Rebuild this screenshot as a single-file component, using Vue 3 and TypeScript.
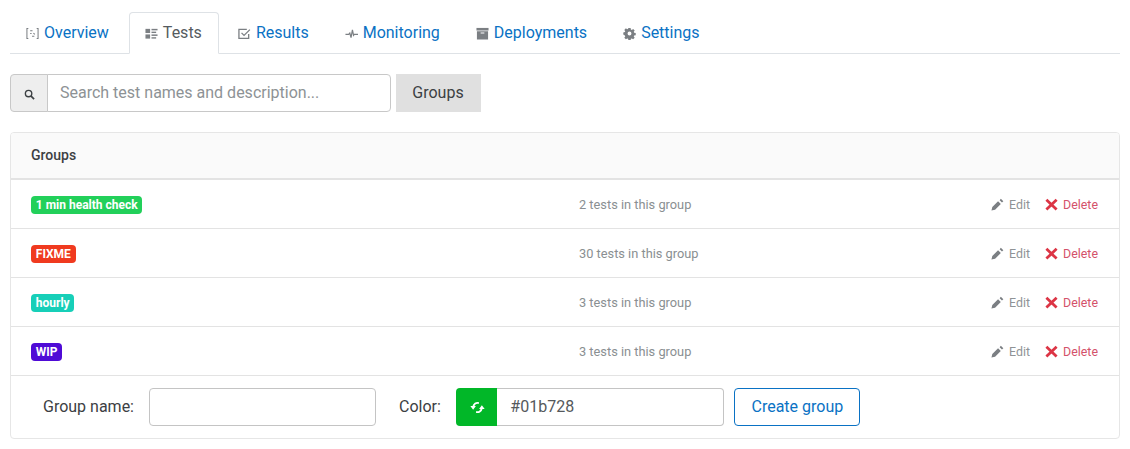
<script setup lang="ts">
interface Tab { label: string; icon: string; active?: boolean }
interface Group { name: string; color: string; count: number }

const tabs: Tab[] = [
  { label: 'Overview', icon: 'overview' },
  { label: 'Tests', icon: 'tests', active: true },
  { label: 'Results', icon: 'results' },
  { label: 'Monitoring', icon: 'monitoring' },
  { label: 'Deployments', icon: 'deployments' },
  { label: 'Settings', icon: 'settings' },
]

const groups: Group[] = [
  { name: '1 min health check', color: '#22d05a', count: 2 },
  { name: 'FIXME', color: '#f03a1f', count: 30 },
  { name: 'hourly', color: '#17cfb8', count: 3 },
  { name: 'WIP', color: '#4f0bd6', count: 3 },
]
</script>

<template>
  <div class="page">
    <nav class="tabs">
      <a v-for="tab in tabs" :key="tab.label" class="tab" :class="{ active: tab.active }">
        <svg class="tab-icon" viewBox="0 0 14 14" aria-hidden="true">
          <g v-if="tab.icon === 'overview'" fill="none" stroke="currentColor" stroke-width="1.1">
            <path d="M2.500 1.500H1v11h1.500M11.500 1.500H13v11h-1.500" />
            <path d="M4.500 4h2.500M4.500 7h1.500M8 6.500l1.500 1.500M6.500 10h2.500" />
          </g>
          <g v-else-if="tab.icon === 'tests'" fill="currentColor">
            <rect x="0.500" y="2" width="5" height="4.500" />
            <rect x="0.500" y="8" width="5" height="4.500" />
            <rect x="7" y="2" width="6.500" height="1.600" />
            <rect x="7" y="5" width="5" height="1.500" />
            <rect x="7" y="8" width="6.500" height="1.600" />
            <rect x="7" y="11" width="5" height="1.500" />
          </g>
          <g v-else-if="tab.icon === 'results'" fill="none" stroke="currentColor" stroke-width="1.400">
            <path d="M11.500 7.500V12.300H1V2.500h8.500" />
            <path d="M3.800 6.300l2.700 2.700L12.800 2.800" />
          </g>
          <path
            v-else-if="tab.icon === 'monitoring'"
            d="M0.500 8h3.500l1.200-1.500 1.300 5 1.500-8.500 1.200 6 0.800-1h4"
            fill="none"
            stroke="currentColor"
            stroke-width="1.300"
          />
          <g v-else-if="tab.icon === 'deployments'" fill="currentColor">
            <path d="M0.500 1h13v2.800h-13z" />
            <path d="M1 4.600h12V13.500H1zM5 5.800v1.200h4V5.800z" fill-rule="evenodd" />
          </g>
          <g v-else fill="currentColor">
            <path
              fill-rule="evenodd"
              d="M5.800 1h2.400l.3 1.700 1 .4 1.400-1 1.700 1.700-1 1.400.4 1 1.700.3v2.400l-1.700.3-.4 1 1 1.400-1.700 1.700-1.400-1-1 .4-.3 1.700H5.800l-.3-1.700-1-.4-1.400 1-1.700-1.700 1-1.400-.4-1L.3 8.200V5.800L2 5.500l.4-1-1-1.400 1.700-1.700 1.400 1 1-.4zM7 4.900a2.100 2.100 0 1 0 0 4.200 2.100 2.100 0 0 0 0-4.200z"
            />
          </g>
        </svg>
        <span>{{ tab.label }}</span>
      </a>
    </nav>

    <div class="search-row">
      <div class="search-group">
        <span class="search-addon">
          <svg viewBox="0 0 12 12" class="search-icon" aria-hidden="true">
            <circle cx="5" cy="5" r="3.500" fill="none" stroke="currentColor" stroke-width="1.500" />
            <path d="M7.500 7.500L11 11" stroke="currentColor" stroke-width="1.800" />
          </svg>
        </span>
        <input class="search-input" type="text" placeholder="Search test names and description..." />
      </div>
      <button class="groups-btn" type="button">Groups</button>
    </div>

    <section class="card">
      <header class="card-header">Groups</header>
      <div v-for="group in groups" :key="group.name" class="row">
        <div class="badge-cell">
          <span class="badge" :style="{ backgroundColor: group.color }">{{ group.name }}</span>
        </div>
        <div class="count">{{ group.count }} tests in this group</div>
        <div class="actions">
          <a class="action edit">
            <svg viewBox="0 0 14 14" class="action-icon" aria-hidden="true">
              <path fill="currentColor" d="M0.500 13.500l.9-3.800 6.200-6.200 3 3-6.200 6.200zM9.300 2.300l1.300-1.500 2.700 2.700-1.500 1.300z" />
            </svg>
            <span>Edit</span>
          </a>
          <a class="action delete">
            <svg viewBox="0 0 14 14" class="action-icon del-icon" aria-hidden="true">
              <path d="M1.500 2l11 10.500M12.500 2L1.500 12.500" stroke="currentColor" stroke-width="3" fill="none" />
            </svg>
            <span>Delete</span>
          </a>
        </div>
      </div>
      <form class="create-form" @submit.prevent>
        <label class="field-label" for="group-name">Group name:</label>
        <input id="group-name" class="name-input" type="text" />
        <label class="field-label color-label" for="group-color">Color:</label>
        <div class="color-group">
          <span class="color-addon">
            <svg viewBox="0 0 16 14" class="refresh-icon" aria-hidden="true">
              <path fill="none" stroke="currentColor" stroke-width="2" d="M9.500 2.200C6.500 1.500 4 3 3.300 6.500M6.500 11.800C9.500 12.500 12 11 12.700 7.500" />
              <path fill="currentColor" d="M0.300 5.500h6L3.300 9.300zM15.700 8.500h-6l3-3.800z" />
            </svg>
          </span>
          <input id="group-color" class="color-input" type="text" value="#01b728" />
        </div>
        <button class="create-btn" type="button">Create group</button>
      </form>
    </section>
  </div>
</template>

<style>
html,
body {
  margin: 0;
  background: #fff;
}
</style>

<style scoped>
.page {
  box-sizing: border-box;
  width: 1130px;
  height: 449px;
  padding: 12px 10px 0;
  font-family: Roboto, "Liberation Sans", sans-serif;
  font-size: 16px;
  color: #3c4043;
}
.tabs {
  display: flex;
  height: 42px;
  box-sizing: border-box;
  border-bottom: 1px solid #dee2e6;
}
.tab {
  display: flex;
  align-items: center;
  gap: 5px;
  height: 42px;
  box-sizing: border-box;
  padding: 0 19px 2px 15px;
  color: #0a72c4;
  border: 1px solid transparent;
  border-radius: 4px 4px 0 0;
}
.tab.active {
  padding-right: 16px;
  margin-right: 3px;
  color: #555b60;
  background: #fff;
  border-color: #dee2e6 #dee2e6 #fff;
}
.tab-icon {
  width: 13px;
  height: 13px;
  color: #7b7f83;
  flex: none;
  margin-top: 3px;
}
.search-row {
  display: flex;
  gap: 5px;
  margin-top: 20px;
}
.search-group {
  display: flex;
  width: 381px;
  height: 38px;
}
.search-addon {
  display: flex;
  align-items: center;
  justify-content: center;
  width: 36px;
  flex: none;
  box-sizing: content-box;
  background: #eeeeee;
  border: 1px solid #c8c8c8;
  border-radius: 4px 0 0 4px;
  color: #3c4043;
}
.search-icon {
  width: 11px;
  height: 11px;
  margin-top: 2px;
}
.search-input {
  flex: 1;
  min-width: 0;
  box-sizing: border-box;
  margin-left: -1px;
  padding: 0 12px 2px;
  border: 1px solid #c8c8c8;
  border-radius: 0 4px 4px 0;
  font: inherit;
  color: #495057;
  outline: none;
}
.search-input::placeholder {
  color: #8d9295;
  opacity: 1;
}
.groups-btn {
  width: 85px;
  height: 38px;
  border: 0;
  border-radius: 0;
  background: #e0e0e0;
  font: inherit;
  color: #3c4043;
  padding: 0 1px 2px 0;
}
.card {
  margin-top: 20px;
  height: 307px;
  box-sizing: border-box;
  border: 1px solid #e6e6e6;
  border-radius: 4px;
  overflow: hidden;
}
.card-header {
  display: flex;
  align-items: center;
  height: 47px;
  box-sizing: border-box;
  padding: 0 20px 2px;
  background: #fafafa;
  border-bottom: 2px solid #e3e3e3;
  font-size: 14px;
  font-weight: 500;
  color: #3c4043;
}
.row {
  display: grid;
  grid-template-columns: 548px 1fr auto;
  align-items: center;
  height: 49px;
  box-sizing: border-box;
  padding: 0 21px 0 20px;
  border-bottom: 1px solid #e3e3e3;
  font-size: 12.8px;
}
.badge-cell {
  display: flex;
  padding-top: 2px;
}
.badge {
  display: inline-block;
  padding: 0 4.8px;
  height: 18px;
  line-height: 18px;
  border-radius: 4px;
  color: #fff;
  font-size: 12px;
  font-weight: 700;
  white-space: nowrap;
}
.count {
  color: #8a8f92;
}
.actions {
  display: flex;
  gap: 15px;
  padding-top: 1px;
}
.action {
  display: flex;
  align-items: center;
  gap: 5px;
  font-size: 12.4px;
}
.edit {
  color: #8f9396;
}
.delete {
  color: #d4526a;
}
.action-icon {
  width: 13px;
  height: 13px;
}
.edit .action-icon {
  color: #7b7f83;
}
.del-icon {
  color: #dc3545;
}
.create-form {
  display: flex;
  align-items: center;
  height: 62px;
  padding-left: 32px;
}
.field-label {
  color: #3c4043;
  padding-bottom: 2px;
}
.name-input {
  width: 227px;
  height: 38px;
  box-sizing: border-box;
  margin-left: 15px;
  border: 1px solid #c4c4c4;
  border-radius: 4px;
  font: inherit;
  outline: none;
}
.color-label {
  margin-left: 23px;
}
.color-group {
  display: flex;
  width: 268px;
  height: 38px;
  margin-left: 15.500px;
}
.color-addon {
  display: flex;
  align-items: center;
  justify-content: center;
  width: 41px;
  box-sizing: border-box;
  padding-left: 2px;
  flex: none;
  background: #01b728;
  border-radius: 4px 0 0 4px;
  color: #fff;
}
.refresh-icon {
  width: 15px;
  height: 13px;
}
.color-input {
  flex: 1;
  min-width: 0;
  box-sizing: border-box;
  padding: 0 12px 2px 13px;
  border: 1px solid #c4c4c4;
  border-left: 0;
  border-radius: 0 4px 4px 0;
  font: inherit;
  color: #55595c;
  outline: none;
}
.create-btn {
  width: 126px;
  height: 38px;
  margin-left: 10px;
  padding: 0 0 2px;
  background: #fff;
  border: 1px solid #0a72c4;
  border-radius: 4px;
  font: inherit;
  color: #0a72c4;
}
</style>
